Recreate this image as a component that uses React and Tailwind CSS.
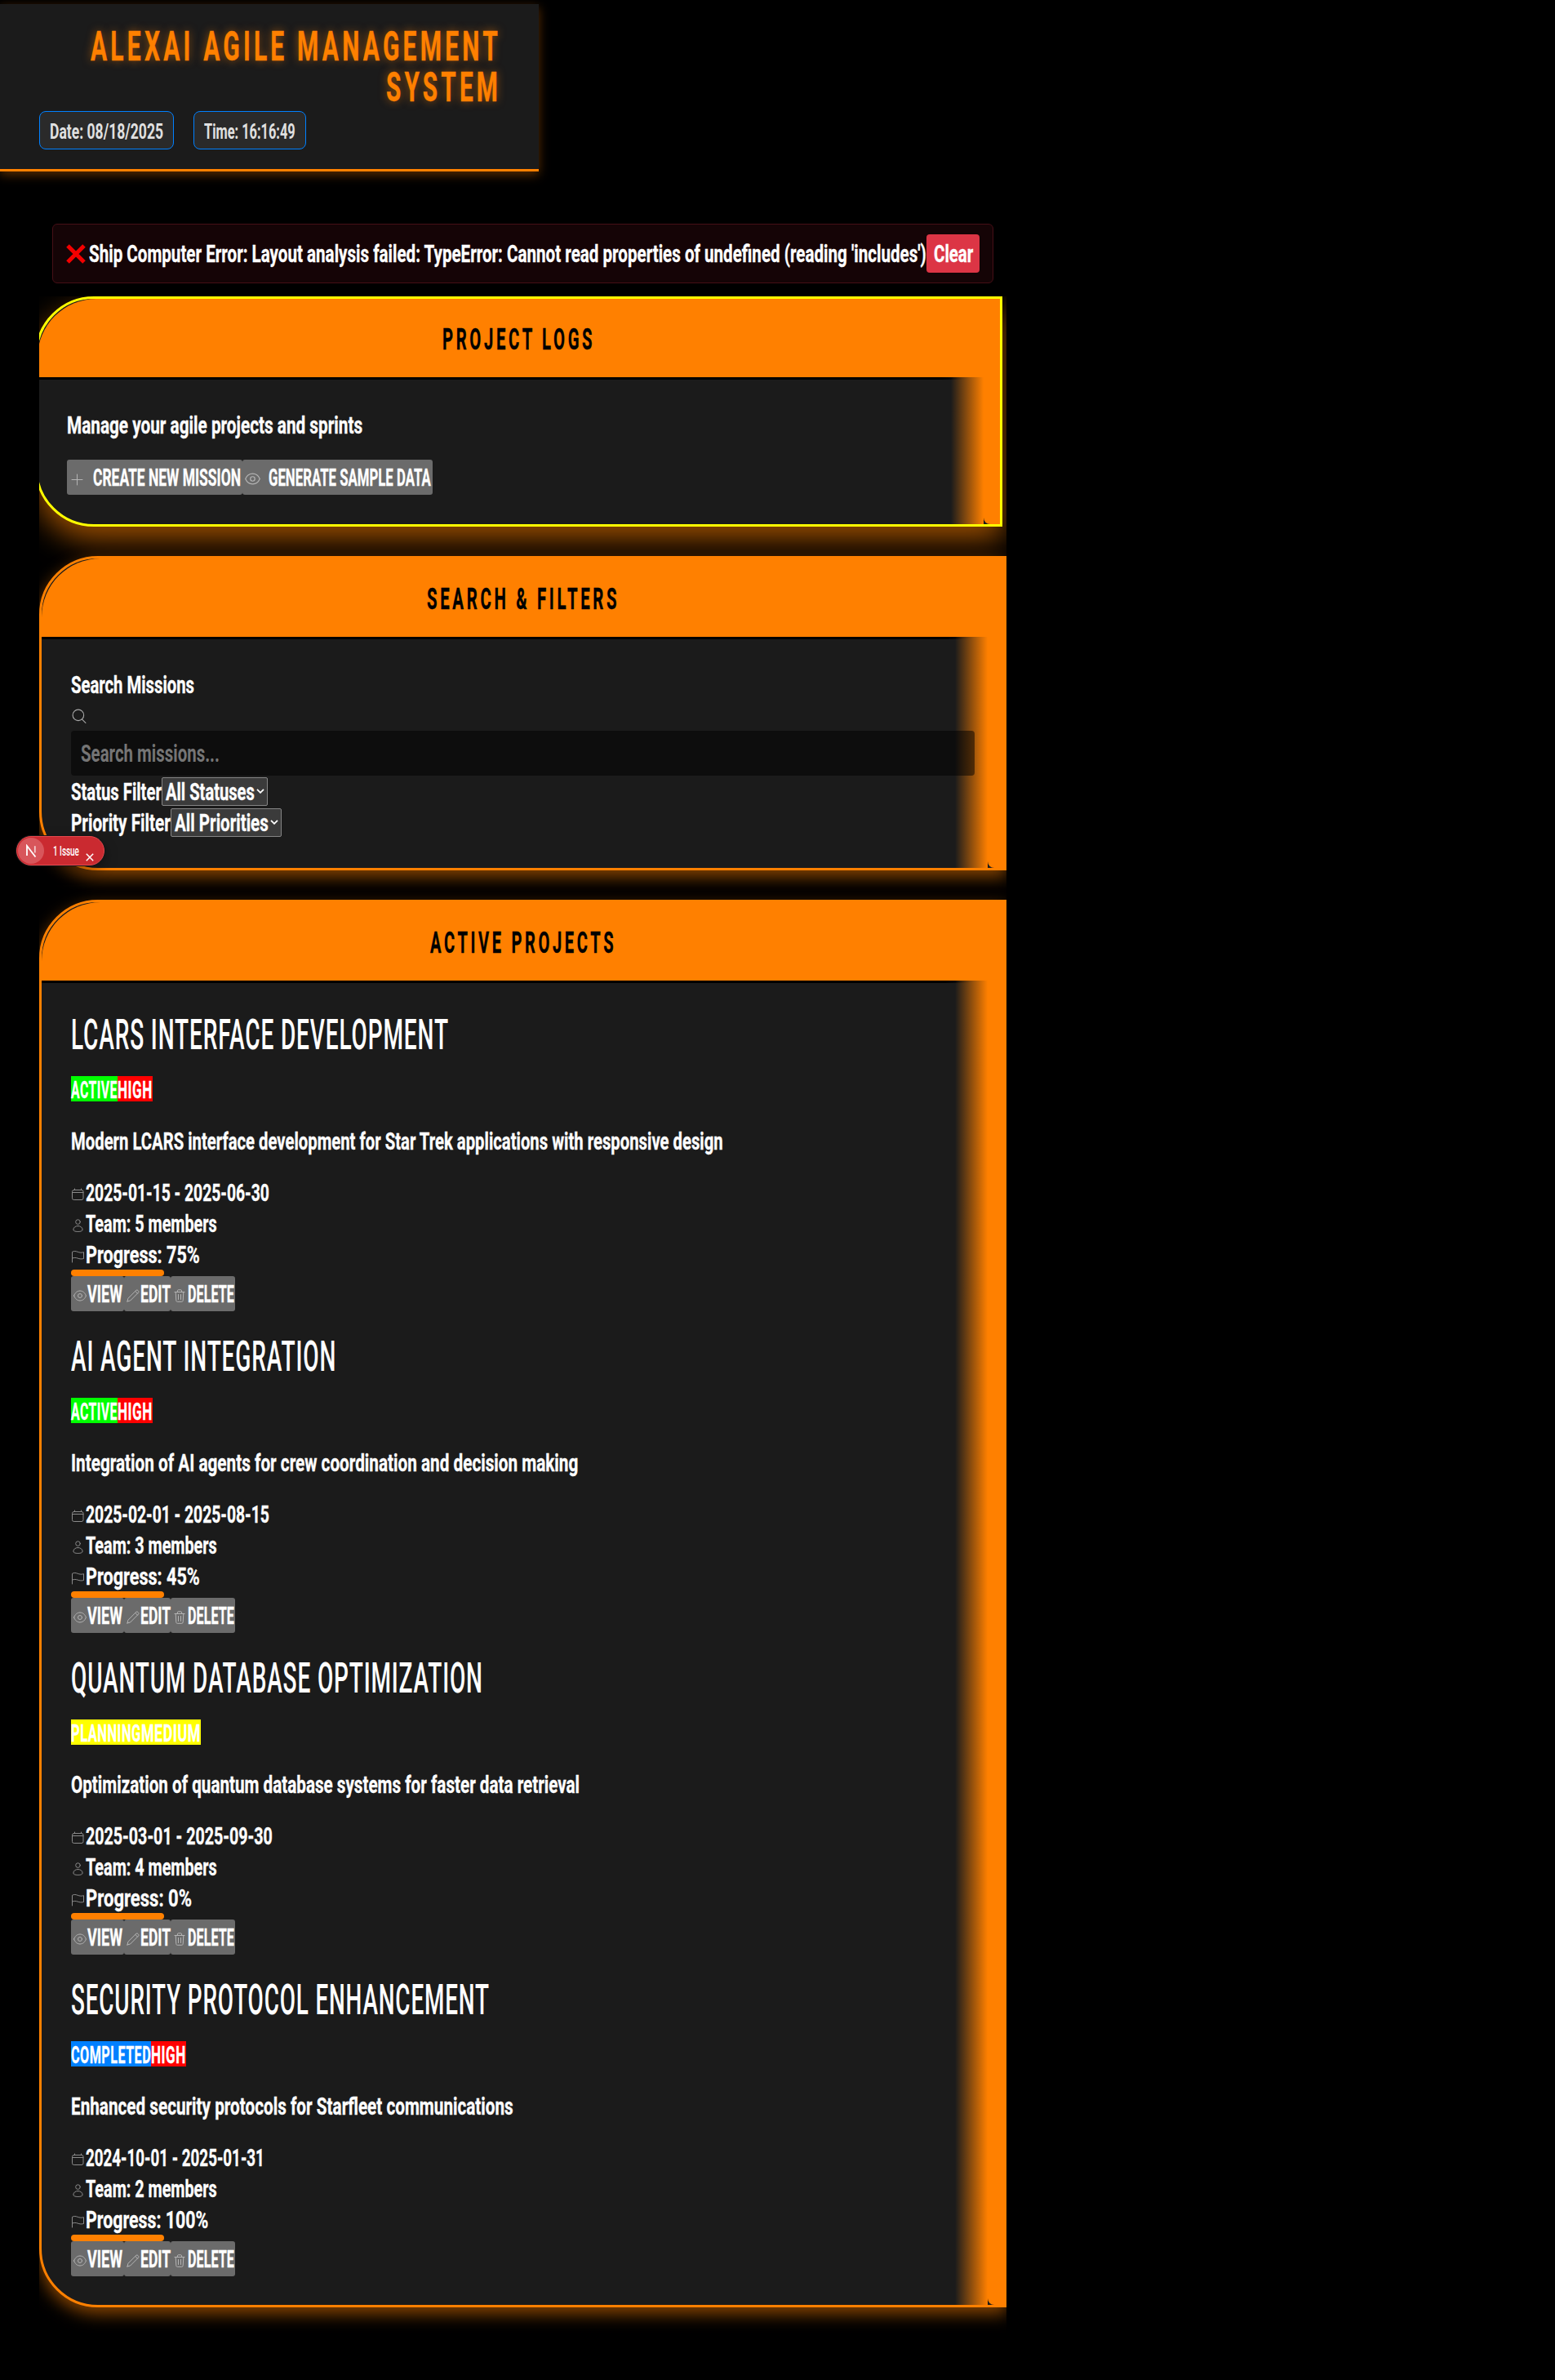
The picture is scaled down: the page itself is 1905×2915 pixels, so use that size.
import React, { useLayoutEffect, useRef, useState } from "react";

/* Condensed display text: squeezes its glyphs horizontally to a set width. */
function Fit({ w, className = "", children }) {
  const ref = useRef(null);
  const [scale, setScale] = useState(0.6);
  useLayoutEffect(() => {
    const natural = ref.current.offsetWidth;
    if (natural > 0) setScale(w / natural);
  }, [w, children]);
  return (
    <span className="inline-block shrink-0 whitespace-nowrap" style={{ width: w }}>
      <span
        ref={ref}
        className={`inline-block origin-left whitespace-nowrap ${className}`}
        style={{ transform: `scaleX(${scale})` }}
      >
        {children}
      </span>
    </span>
  );
}

function Svg({ children, className }) {
  return (
    <svg
      viewBox="0 0 16 16"
      fill="none"
      stroke="currentColor"
      strokeWidth="1"
      strokeLinecap="round"
      strokeLinejoin="round"
      className={`h-4 w-4 shrink-0 ${className}`}
    >
      {children}
    </svg>
  );
}

const PlusIcon = ({ className }) => (
  <Svg className={className}>
    <path d="M8.500 2v13M2 8.500h13" />
  </Svg>
);
const CalendarIcon = ({ className }) => (
  <Svg className={className}>
    <rect x="1.500" y="2.500" width="13.500" height="12" rx="2" />
    <path d="M1.500 5.500h13.500M4.500 1v1.500M12.500 1v1.500" />
  </Svg>
);
const UserIcon = ({ className }) => (
  <Svg className={className}>
    <circle cx="8.500" cy="3.600" r="2.800" />
    <path d="M8.500 8.500c3.200 0 5.600 2 5.600 4.600 0 1.600-2.300 2.400-5.600 2.400s-5.600-.8-5.600-2.400c0-2.600 2.400-4.600 5.600-4.600z" />
  </Svg>
);
const FlagIcon = ({ className }) => (
  <Svg className={className}>
    <path d="M1.500 15V2.300c2.300-1.300 4.400-.9 6.700 0s4.600 1.200 7.300.4v7.800c-2.700.8-5 .4-7.300-.4s-4.400-1-6.700 0" />
  </Svg>
);
const EyeIcon = ({ className }) => (
  <Svg className={className}>
    <path d="M.6 8C2 4.200 4.700 2 8 2S14 4.200 15.400 8C14 11.800 11.300 14 8 14S2 11.800.6 8z" />
    <circle cx="8" cy="8" r="2.500" />
  </Svg>
);
const WideEyeIcon = ({ className }) => (
  <Svg className={`!h-[19px] !w-[19px] ${className}`}>
    <path d="M.6 8C2 4.700 4.700 2.700 8 2.700S14 4.700 15.400 8C14 11.300 11.300 13.300 8 13.300S2 11.300.6 8z" />
    <circle cx="8" cy="8" r="2.300" />
  </Svg>
);
const PencilIcon = ({ className }) => (
  <Svg className={className}>
    <path d="M1 15l.9-3.700L12.200 1c.8-.8 3.500 1.800 2.700 2.700L4.600 14 1 15zM10.800 2.500l2.700 2.700" />
  </Svg>
);
const TrashIcon = ({ className }) => (
  <Svg className={className}>
    <path d="M2 3.500h12M5.400 3.500V2c0-.6.4-1.200 1-1.200h3.200c.6 0 1 .6 1 1.200v1.500M3.200 3.500l.6 10.300c0 .9.6 1.500 1.500 1.500h5.400c.9 0 1.500-.6 1.500-1.500l.6-10.300M6.500 6.500v6M9.500 6.500v6" />
  </Svg>
);

function Panel({ title, titleWidth, border, shadow, className = "", children }) {
  return (
    <section
      className={`relative w-[1185px] rounded-l-[72px] border-[3px] bg-[#1b1b1b] ${border} ${shadow} ${className}`}
    >
      <div className="absolute inset-y-0 right-5 w-10 bg-linear-to-r from-[#ff8000]/0 to-[#ff8000]" />
      <div className="absolute inset-y-0 right-0 w-5 rounded-bl-lg bg-[#ff8000]" />
      <header className="relative h-24 rounded-tl-[72px] bg-[#ff8000]">
        <div className="flex h-full items-center justify-center pt-1 text-[36px] leading-none text-black">
          <Fit w={titleWidth} className="font-bold tracking-[0.18em]">
            {title}
          </Fit>
        </div>
      </header>
      <div className="h-[3px] w-[1142px] bg-linear-to-r from-black from-[97%] to-transparent" />
      <div className="relative">{children}</div>
    </section>
  );
}

function Action({ icon: Icon, label, width, pad, gap, textWidth }) {
  return (
    <button
      type="button"
      className="flex h-[43px] shrink-0 items-center rounded-[3px] bg-[#6b6b6b] text-left text-white"
      style={{ width, paddingLeft: pad }}
    >
      <Icon className="mt-1 text-[#b4b4b4]" />
      <span className="mt-[2px] flex" style={{ marginLeft: gap }}>
        <Fit w={textWidth}>{label}</Fit>
      </span>
    </button>
  );
}

const badgeColors = {
  green: "bg-[#00ff00]",
  red: "bg-[#ff0000]",
  yellow: "bg-[#ffff00]",
  blue: "bg-[#0080ff]",
};

const projects = [
  {
    name: "LCARS INTERFACE DEVELOPMENT",
    nameW: 463,
    badges: [["ACTIVE", "green", 57], ["HIGH", "red", 43]],
    desc: "Modern LCARS interface development for Star Trek applications with responsive design",
    descW: 799,
    dates: "2025-01-15 - 2025-06-30",
    datesW: 225,
    team: 5,
    progress: 75,
    progW: 140,
  },
  {
    name: "AI AGENT INTEGRATION",
    nameW: 325,
    badges: [["ACTIVE", "green", 57], ["HIGH", "red", 43]],
    desc: "Integration of AI agents for crew coordination and decision making",
    descW: 621,
    dates: "2025-02-01 - 2025-08-15",
    datesW: 225,
    team: 3,
    progress: 45,
    progW: 140,
  },
  {
    name: "QUANTUM DATABASE OPTIMIZATION",
    nameW: 505,
    badges: [["PLANNING", "yellow", 86], ["MEDIUM", "yellow", 73]],
    desc: "Optimization of quantum database systems for faster data retrieval",
    descW: 623,
    dates: "2025-03-01 - 2025-09-30",
    datesW: 229,
    team: 4,
    progress: 0,
    progW: 130,
  },
  {
    name: "SECURITY PROTOCOL ENHANCEMENT",
    nameW: 513,
    badges: [["COMPLETED", "blue", 98], ["HIGH", "red", 43]],
    desc: "Enhanced security protocols for Starfleet communications",
    descW: 542,
    dates: "2024-10-01 - 2025-01-31",
    datesW: 219,
    team: 2,
    progress: 100,
    progW: 150,
  },
];

function Meta({ icon: Icon, width, children }) {
  return (
    <div className="flex h-[38px] items-center">
      <Icon className="mt-1 mr-0.5 text-[#8a8a8a]" />
      <Fit w={width}>{children}</Fit>
    </div>
  );
}

function ProjectCard({ p }) {
  return (
    <article className="h-[394px]">
      <h3 className="flex h-[57px] items-center pb-px text-[52px] leading-none font-medium [-webkit-text-stroke:0]">
        <Fit w={p.nameW} className="tracking-[0.03em]">{p.name}</Fit>
      </h3>
      <div className="mt-[21px] flex h-[31px]">
        {p.badges.map(([label, color, w]) => (
          <span key={label} className={`flex items-center pt-[3px] ${badgeColors[color]}`}>
            <Fit w={w} className="tracking-[0.03em]">{label}</Fit>
          </span>
        ))}
      </div>
      <p className="mt-[30px] mb-[25px] flex h-[38px] items-center">
        <Fit w={p.descW}>{p.desc}</Fit>
      </p>
      <Meta icon={CalendarIcon} width={p.datesW}>{p.dates}</Meta>
      <Meta icon={UserIcon} width={161}>{`Team: ${p.team} members`}</Meta>
      <Meta icon={FlagIcon} width={p.progW}>{`Progress: ${p.progress}%`}</Meta>
      <div className="-mt-px h-2 w-[114px] rounded-full bg-[#ff8000]" />
      <div className="flex">
        <Action icon={EyeIcon} label="VIEW" width={65} pad={3} gap={1} textWidth={43} />
        <Action icon={PencilIcon} label="EDIT" width={57} pad={3} gap={1} textWidth={37} />
        <Action icon={TrashIcon} label="DELETE" width={79} pad={3} gap={2} textWidth={57} />
      </div>
    </article>
  );
}

function Select({ label, width, textWidth }) {
  return (
    <span
      className="flex h-[35px] items-center rounded-[2px] border border-[#858585] bg-[#3b3b3b] pl-1"
      style={{ width }}
    >
      <span className="flex pt-0.5">
        <Fit w={textWidth}>{label}</Fit>
      </span>
      <svg viewBox="0 0 10 6" className="ml-0.5 h-1.5 w-2.5 shrink-0" fill="none" stroke="white" strokeWidth="1.800">
        <path d="M1 .8l4 4 4-4" />
      </svg>
    </span>
  );
}

export default function App() {
  return (
    <div className="relative h-[2915px] w-full overflow-hidden bg-black pt-[5px] font-['Roboto','Liberation_Sans',sans-serif] text-[29px] leading-none font-bold text-white [-webkit-text-stroke:0.35px]">
      <header className="h-[205px] w-[660px] border-b-[3px] border-[#ff8000] bg-[#1b1b1b] pt-[27px] pr-[46px] pl-12 shadow-[0_4px_12px_rgba(255,128,0,0.35)]">
        <h1 className="flex flex-col items-end text-[50px] leading-[50px] text-[#ff8000] [text-shadow:0_0_14px_rgba(255,128,0,0.55)]">
          <Fit w={503} className="tracking-[0.14em]">ALEXAI AGILE MANAGEMENT</Fit>
          <Fit w={141} className="tracking-[0.14em]">SYSTEM</Fit>
        </h1>
        <div className="mt-1 flex gap-6 text-[26px] leading-none text-[#e0e0e0] [-webkit-text-stroke:0]">
          <span className="flex h-[47px] w-[165px] items-center justify-center rounded-lg border border-[#0080ff] bg-[#2a2a2a] pt-[3px]">
            <Fit w={139}>Date: 08/18/2025</Fit>
          </span>
          <span className="flex h-[47px] w-[138px] items-center justify-center rounded-lg border border-[#0080ff] bg-[#2a2a2a] pt-[3px]">
            <Fit w={112}>Time: 16:16:49</Fit>
          </span>
        </div>
      </header>

      <div className="mt-16 ml-16 flex h-[73px] w-[1153px] items-center rounded-md border border-[#460f16] bg-[#150406] pl-4">
        <svg viewBox="0 0 24 24" className="h-6 w-6 shrink-0" stroke="#f40000" strokeWidth="5">
          <path d="M2 2l20 20M22 2L2 22" />
        </svg>
        <span className="mt-0.5 ml-1 flex">
          <Fit w={1026}>
            Ship Computer Error: Layout analysis failed: TypeError: Cannot read properties of undefined (reading 'includes')
          </Fit>
        </span>
        <button type="button" className="flex h-[47px] w-[65px] shrink-0 items-center justify-center rounded bg-[#dc3545] pt-0.5">
          <Fit w={48}>Clear</Fit>
        </button>
      </div>

      <main className="mt-4 ml-12 h-[2520px] w-[1185px] overflow-hidden">
        <Panel
          title="PROJECT LOGS"
          titleWidth={187}
          border="border-[#ffff00]"
          shadow="shadow-[0_16px_36px_rgba(255,128,0,0.6)]"
          className="-ml-[5px] h-[282px]"
        >
          <p className="mt-[37px] ml-9 flex h-[38px] items-center">
            <Fit w={362}>Manage your agile projects and sprints</Fit>
          </p>
          <div className="mt-[23px] ml-9 flex">
            <Action icon={PlusIcon} label="CREATE NEW MISSION" width={215} pad={4} gap={12} textWidth={181} />
            <Action icon={WideEyeIcon} label="GENERATE SAMPLE DATA" width={233} pad={3} gap={10} textWidth={199} />
          </div>
        </Panel>

        <Panel
          title="SEARCH & FILTERS"
          titleWidth={236}
          border="border-[#ff8000]"
          shadow="shadow-[0_8px_20px_rgba(255,128,0,0.53)]"
          className="mt-9 h-[385px]"
        >
          <div className="px-9 pt-[37px]">
            <div className="flex h-[38px] items-center">
              <Fit w={151}>Search Missions</Fit>
            </div>
            <Svg className="mt-[10px] ml-px !h-[18px] !w-[18px] text-[#a8a8a8]">
              <circle cx="7" cy="7" r="6" />
              <path d="M11 11.500l4 4" />
            </Svg>
            <div className="mt-[9px] flex h-[55px] w-[1107px] items-center rounded bg-black/50 pt-0.5 pl-3 text-[#757575] [-webkit-text-stroke:0]">
              <Fit w={170}>Search missions...</Fit>
            </div>
            <div className="flex h-[38px] items-center">
              <span className="flex pt-[3px]">
                <Fit w={111}>Status Filter</Fit>
              </span>
              <Select label="All Statuses" width={130} textWidth={109} />
            </div>
            <div className="flex h-[38px] items-center">
              <span className="flex pt-[3px]">
                <Fit w={122}>Priority Filter</Fit>
              </span>
              <Select label="All Priorities" width={136} textWidth={115} />
            </div>
          </div>
        </Panel>

        <Panel
          title="ACTIVE PROJECTS"
          titleWidth={228}
          border="border-[#ff8000]"
          shadow="shadow-[0_8px_20px_rgba(255,128,0,0.53)]"
          className="mt-9 h-[1724px]"
        >
          <div className="pt-9 pl-9">
            {projects.map((p) => (
              <ProjectCard key={p.name} p={p} />
            ))}
          </div>
        </Panel>
      </main>

      <div className="absolute top-[1024px] left-5 flex h-9 w-[108px] items-center rounded-full border border-[#e5484d] bg-[#ca2a30] shadow-[0_0_0_1px_#171717,0_6px_16px_rgba(0,0,0,0.4)]">
        <span className="ml-px flex h-8 w-8 shrink-0 items-center justify-center rounded-full bg-[#d8565b]">
          <svg viewBox="0 0 16 16" className="h-4 w-4" fill="none" strokeWidth="1.800">
            <path d="M3 14V2l10.500 13.500" stroke="white" />
            <path d="M12.800 2.200v8.300" stroke="white" strokeOpacity="0.700" />
          </svg>
        </span>
        <span className="ml-[11px] flex text-[17px] leading-none font-medium [-webkit-text-stroke:0]">
          <Fit w={32}>1 Issue</Fit>
        </span>
        <svg viewBox="0 0 10 10" className="mt-[15px] ml-2 h-2.5 w-2.5" stroke="white" strokeWidth="1.500">
          <path d="M.8.8l8.400 8.400M9.200.8L.8 9.200" />
        </svg>
      </div>
    </div>
  );
}
